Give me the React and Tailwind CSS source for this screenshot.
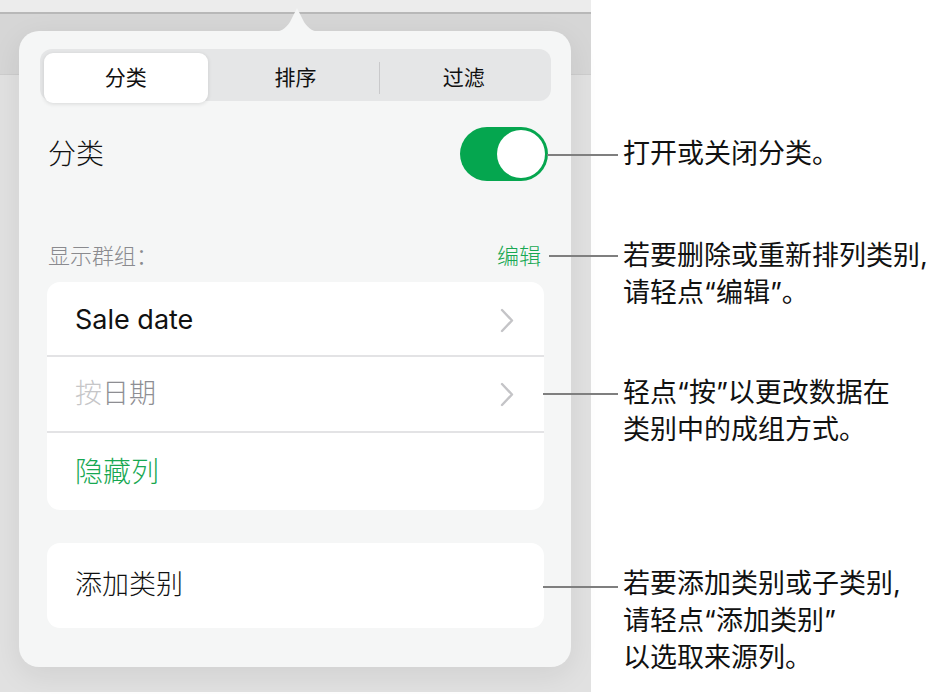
import React from 'react';

const Chevron = () => (
  <svg width="14" height="25" viewBox="0 0 14 25" fill="none">
    <polyline points="2,2 12,12.5 2,23" stroke="#c4c4c7" strokeWidth="2.4" strokeLinecap="round" strokeLinejoin="round" />
  </svg>
);

function Callout({ top, left, lineTop, lines }) {
  return (
    <div className="absolute flex items-start" style={{ top, left }}>
      <div className="h-[2px] bg-[#7f7f7f]" style={{ width: 618 - left, marginTop: lineTop }} />
      <div className="ml-[5px] text-[27px] leading-[37px] font-normal text-[#111]">
        {lines.map((l) => (
          <div key={l} className="whitespace-nowrap">{l}</div>
        ))}
      </div>
    </div>
  );
}

export default function App() {
  return (
    <div className="relative flex w-[944px] h-[694px] bg-white font-light font-['Inter','Noto_Sans_CJK_SC',sans-serif] overflow-hidden">
      {/* dimmed app behind the popover */}
      <div className="w-[591px] h-[692px] pt-[31px] pl-[19px] bg-[linear-gradient(to_bottom,#ececec_0,#ececec_12px,#b8b8b8_12px,#b8b8b8_14px,#d6d6d6_14px,#d6d6d6_74px,#cdcdcd_74px,#cdcdcd_75px,#e1e1e1_75px)]">
        <div className="relative w-[552px] h-[636px] rounded-[20px] bg-[#f5f6f6] shadow-[0_8px_30px_rgba(0,0,0,0.08)] pt-[18px]">
          <svg className="absolute top-[-24px] left-[252px]" width="52" height="25" viewBox="0 0 52 25">
            <path d="M0 25 C10 25 14 22 19 15 L23 7 Q26 1 26 1 Q26 1 29 7 L33 15 C38 22 42 25 52 25 Z" fill="#f5f6f6" />
          </svg>

          {/* segmented control */}
          <div className="ml-[21px] w-[511px] h-[52px] rounded-[12px] bg-[#e5e6e7] p-[4px] grid grid-cols-3 text-[21px] font-normal text-[#111]">
            <div className="mr-[4px] flex items-center justify-center rounded-[9px] bg-white shadow-[0_1px_4px_rgba(0,0,0,0.12)]">分类</div>
            <div className="flex items-center justify-center">排序</div>
            <div className="flex items-center justify-center border-l border-[#c9c9cb] my-[9px]">过滤</div>
          </div>

          {/* toggle row */}
          <div className="mt-[26px] ml-[29px] mr-[23px] h-[54px] flex items-center justify-between">
            <span className="text-[28px] text-[#111]">分类</span>
            <div className="w-[88px] h-[54px] rounded-full bg-[#05a64f] p-[3px] flex justify-end">
              <div className="w-[48px] h-[48px] rounded-full bg-white" />
            </div>
          </div>

          {/* group header */}
          <div className="mt-[60px] ml-[29px] mr-[30px] h-[30px] flex items-center justify-between text-[22px]">
            <span className="text-[#8a8a8e]">显示群组：</span>
            <span className="text-[#17a852]">编辑</span>
          </div>

          <div className="mt-[11px] ml-[28px] mr-[27px] rounded-[13px] bg-white">
            <div className="h-[75px] pt-[4px] pl-[28px] pr-[30px] flex items-center justify-between border-b-2 border-[#e3e3e5]">
              <span className="text-[27px] font-normal text-[#111]">Sale date</span>
              <Chevron />
            </div>
            <div className="h-[76px] pl-[28px] pr-[30px] flex items-center justify-between border-b-2 border-[#e3e3e5]">
              <span className="text-[27px]">
                <span className="text-[#c6c6c8]">按</span>
                <span className="text-[#8e8e93]">日期</span>
              </span>
              <Chevron />
            </div>
            <div className="h-[77px] pl-[28px] flex items-center text-[28px] text-[#17a852]">隐藏列</div>
          </div>

          <div className="mt-[33px] ml-[28px] mr-[27px] h-[85px] rounded-[13px] bg-white pl-[28px] flex items-center text-[27px] text-[#111]">
            添加类别
          </div>
        </div>
      </div>

      <Callout top={135} left={547} lineTop={19} lines={['打开或关闭分类。']} />
      <Callout top={237} left={549} lineTop={18} lines={['若要删除或重新排列类别,', '请轻点“编辑”。']} />
      <Callout top={374} left={543} lineTop={19} lines={['轻点“按”以更改数据在', '类别中的成组方式。']} />
      <Callout top={565} left={543} lineTop={21} lines={['若要添加类别或子类别,', '请轻点“添加类别”', '以选取来源列。']} />
    </div>
  );
}
